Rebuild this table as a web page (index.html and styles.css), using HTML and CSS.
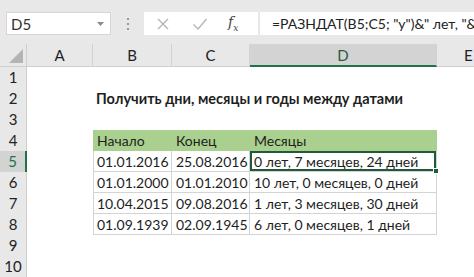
FILE: index.html
```html
<!DOCTYPE html>
<html lang="ru">
<head>
<meta charset="utf-8">
<link rel="stylesheet" href="styles.css">
</head>
<body>
<div class="topbar">
  <div class="namebox">
    <span class="nb-text">D5</span>
    <svg class="nb-arrow" width="7" height="4" viewBox="0 0 7 4"><path d="M0 0h7L3.5 4z" fill="#8a8a8a"/></svg>
  </div>
  <div class="dots"><i></i><i></i><i></i></div>
  <div class="fxbox">
    <svg class="ico" width="14" height="14" viewBox="0 0 14 14"><path d="M2 2l10 10M12 2L2 12" stroke="#b5b5b5" stroke-width="1.4" fill="none"/></svg>
    <svg class="ico" width="16" height="14" viewBox="0 0 16 14"><path d="M1.5 7.5l4.5 4.5L14.5 2" stroke="#b5b5b5" stroke-width="1.4" fill="none"/></svg>
    <span class="fx">f<sub>x</sub></span>
  </div>
  <div class="formula">=РАЗНДАТ(B5;C5; "y")&amp;" лет, "&amp;</div>
</div>
<div class="sheet">
  <div class="corner"><span class="tri"></span></div>
  <div class="colh">A</div>
  <div class="colh">B</div>
  <div class="colh">C</div>
  <div class="colh sel">D</div>
  <div class="colh last">E</div>

  <div class="rowh">1</div><div class="c"></div><div class="c"></div><div class="c"></div><div class="c"></div><div class="c"></div>
  <div class="rowh">2</div><div class="c"></div><div class="c title">Получить дни, месяцы и годы между датами</div>
  <div class="rowh">3</div><div class="c"></div><div class="c"></div><div class="c"></div><div class="c"></div><div class="c"></div>
  <div class="rowh">4</div><div class="c"></div><div class="c th">Начало</div><div class="c th">Конец</div><div class="c th">Месяцы</div><div class="c"></div>
  <div class="rowh sel">5</div><div class="c"></div><div class="c td first">01.01.2016</div><div class="c td">25.08.2016</div><div class="c td active">0 лет, 7 месяцев, 24 дней<span class="handle"></span></div><div class="c"></div>
  <div class="rowh">6</div><div class="c"></div><div class="c td first">01.01.2000</div><div class="c td">01.01.2010</div><div class="c td">10 лет, 0 месяцев, 0 дней</div><div class="c"></div>
  <div class="rowh">7</div><div class="c"></div><div class="c td first">10.04.2015</div><div class="c td">09.08.2016</div><div class="c td">1 лет, 3 месяцев, 30 дней</div><div class="c"></div>
  <div class="rowh">8</div><div class="c"></div><div class="c td first">01.09.1939</div><div class="c td">02.09.1945</div><div class="c td">6 лет, 0 месяцев, 1 дней</div><div class="c"></div>
  <div class="rowh">9</div><div class="c"></div><div class="c"></div><div class="c"></div><div class="c"></div><div class="c"></div>
  <div class="rowh">10</div><div class="c"></div><div class="c"></div><div class="c"></div><div class="c"></div><div class="c"></div>
</div>
</body>
</html>
```
FILE: styles.css
```css
* { box-sizing: border-box; }
html, body { margin: 0; padding: 0; }
body {
  width: 474px;
  height: 277px;
  overflow: hidden;
  background: #ffffff;
  font-family: "Lato", "Open Sans", sans-serif;
  color: #1e1e1e;
}
.topbar {
  height: 44px;
  background: #e8e8e8;
  display: flex;
  align-items: flex-start;
  padding-top: 12px;
  padding-left: 6px;
}
.namebox {
  width: 105px;
  height: 23px;
  background: #fff;
  border: 1px solid #d6d6d6;
  display: flex;
  align-items: center;
  justify-content: space-between;
  padding: 0 6px 0 4px;
  font-size: 15px;
  color: #333;
}
.dots {
  width: 33px;
  height: 23px;
  display: flex;
  flex-direction: column;
  align-items: center;
  justify-content: center;
  gap: 3px;
}
.dots i {
  display: block;
  width: 2px;
  height: 2px;
  background: #9a9a9a;
}
.fxbox {
  width: 114px;
  height: 23px;
  background: #fff;
  display: flex;
  align-items: center;
  padding-left: 12px;
  gap: 22px;
}
.fx {
  font-family: "DejaVu Serif", "Liberation Serif", serif;
  font-style: italic;
  font-size: 14px;
  color: #444;
  margin-left: -2px;
}
.fx sub { font-size: 9px; }
.formula {
  flex: 1;
  min-width: 0;
  height: 23px;
  margin-left: 2px;
  background: #fff;
  font-size: 14px;
  line-height: 23px;
  padding-left: 12px;
  white-space: nowrap;
  overflow: hidden;
  color: #222;
}
.sheet {
  display: grid;
  grid-template-columns: 27px 66px 79px 78px 187px 37px;
  grid-template-rows: 23px repeat(10, 21px);
  font-size: 14px;
}
.corner {
  background: #e8e8e8;
  border-right: 1px solid #cfcfcf;
  border-bottom: 1px solid #cfcfcf;
  position: relative;
}
.tri {
  position: absolute;
  right: 3px;
  bottom: 3px;
  width: 0;
  height: 0;
  border-left: 14px solid transparent;
  border-bottom: 14px solid #b4b4b4;
}
.colh {
  background: #e8e8e8;
  border-right: 1px solid #d2d2d2;
  border-bottom: 1px solid #cfcfcf;
  text-align: center;
  line-height: 22px;
  font-size: 15px;
  color: #222;
}
.colh.sel {
  background: #d3d3d3;
  border-bottom: 2px solid #217346;
  color: #2a5a3c;
}
.colh.last { text-align: left; padding-left: 27px; border-right: 0; }
.rowh {
  background: #e8e8e8;
  border-right: 1px solid #cfcfcf;
  text-align: center;
  line-height: 21px;
  font-size: 15px;
  color: #222;
}
.rowh.sel {
  background: #d3d3d3;
  border-right: 2px solid #217346;
  color: #217346;
}
.c {
  line-height: 21px;
  padding-left: 3px;
  white-space: nowrap;
}
.title {
  grid-column: 3 / span 4;
  font-weight: 700;
  font-size: 14.5px;
  padding-left: 3px;
}
.th {
  background: #a9d08e;
  padding-left: 4px;
}
.td {
  border-right: 1px solid #d4d4d4;
  border-bottom: 1px solid #d4d4d4;
  padding-left: 4px;
}
.td.first { border-left: 1px solid #d4d4d4; padding-left: 3px; }
.active {
  position: relative;
  box-shadow: inset 0 0 0 2px #1f5a3a;
}
.handle {
  position: absolute;
  right: -3px;
  bottom: -3px;
  width: 6px;
  height: 6px;
  background: #1f5a3a;
  border: 1px solid #fff;
}
```
